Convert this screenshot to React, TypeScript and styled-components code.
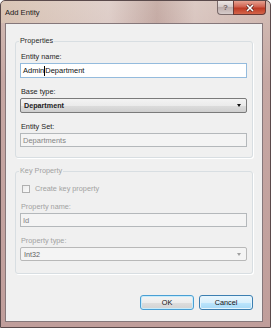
import * as React from "react";
import styled, { createGlobalStyle } from "styled-components";

const GlobalStyle = createGlobalStyle`
  html, body {
    margin: 0;
    padding: 0;
    background: #ffffff;
  }
  body {
    font-family: "Liberation Sans", Arial, sans-serif;
    font-size: 7.3px;
    color: #1e1e1e;
  }
`;

const App: React.FC = (): JSX.Element => (
  <>
    <GlobalStyle />
    <Window>
      <TitleBar>
        <Caption>Add Entity</Caption>
        <CaptionButtons>
          <HelpButton>?</HelpButton>
          <CloseButton>
            <svg width="10" height="8" viewBox="0 0 10 8">
              <path d="M2 1 L8 7 M8 1 L2 7" stroke="#5a2a24" strokeWidth="3" />
              <path d="M2 1 L8 7 M8 1 L2 7" stroke="#ffffff" strokeWidth="1.6" />
            </svg>
          </CloseButton>
        </CaptionButtons>
      </TitleBar>

      <Client>
        <Group>
          <Legend>Properties</Legend>
          <Field>
            <Label>Entity name:</Label>
            <TextBox $focused>
              Admin
              <Caret />
              Department
            </TextBox>
          </Field>
          <Field>
            <Label>Base type:</Label>
            <ComboBox>
              <ComboText>Department</ComboText>
              <Arrow />
            </ComboBox>
          </Field>
          <Field>
            <Label>Entity Set:</Label>
            <TextBox $disabled>Departments</TextBox>
          </Field>
        </Group>

        <Group $disabled>
          <Legend $disabled>Key Property</Legend>
          <CheckRow>
            <CheckBox />
            <Label $disabled>Create key property</Label>
          </CheckRow>
          <Field>
            <Label $disabled>Property name:</Label>
            <TextBox $disabled>Id</TextBox>
          </Field>
          <Field>
            <Label $disabled>Property type:</Label>
            <ComboBox $disabled>
              <ComboText $disabled>Int32</ComboText>
              <Arrow $disabled />
            </ComboBox>
          </Field>
        </Group>

        <Footer>
          <DialogButton $default>OK</DialogButton>
          <DialogButton $hot>Cancel</DialogButton>
        </Footer>
      </Client>
    </Window>
  </>
);

export default App;

const Window = styled.div`
  width: 271px;
  height: 328px;
  box-sizing: border-box;
  display: flex;
  flex-direction: column;
  border: 1px solid #5a4a4b;
  border-radius: 5px 5px 0 0;
  background: linear-gradient(180deg, #d3bdb5 0%, #c6a7a3 25%, #c09e9b 100%);
  overflow: hidden;
`;

const TitleBar = styled.div`
  height: 22px;
  flex: none;
  display: flex;
  justify-content: space-between;
  align-items: flex-start;
  padding: 0 4px 0 4px;
  background: linear-gradient(
    90deg,
    rgba(230, 215, 185, 0.35) 0%,
    rgba(255, 255, 255, 0.3) 40%,
    rgba(120, 80, 80, 0.12) 58%,
    rgba(255, 255, 255, 0.2) 72%,
    rgba(255, 255, 255, 0) 100%
  );
`;

const Caption = styled.div`
  font-size: 7.6px;
  line-height: 22px;
  color: #1a1a1a;
  padding-top: 1px;
`;

const CaptionButtons = styled.div`
  display: flex;
  height: 14px;
`;

const HelpButton = styled.div`
  width: 15px;
  height: 13px;
  border: 1px solid #7a6a6a;
  border-top: none;
  border-right: none;
  border-radius: 0 0 0 4px;
  background: linear-gradient(180deg, #ece6e4 0%, #d2c6c5 50%, #bcadac 50%, #d6cbca 100%);
  color: #6f6363;
  font-weight: bold;
  font-size: 8px;
  line-height: 13px;
  text-align: center;
`;

const CloseButton = styled.div`
  width: 31px;
  height: 13px;
  border: 1px solid #6a3a36;
  border-top: none;
  border-radius: 0 0 4px 0;
  background: linear-gradient(180deg, #e6a190 0%, #d0614f 45%, #bd3a24 55%, #d4654a 100%);
  display: flex;
  align-items: center;
  justify-content: center;
`;

const Client = styled.div`
  flex: 1;
  display: flex;
  flex-direction: column;
  margin: 0 7px 5px 4px;
  border: 1px solid #85777a;
  background: #f0f0f0;
  padding: 12px 0 11px;
`;

const Group = styled.fieldset<{ $disabled?: boolean }>`
  margin: ${p => (p.$disabled ? "8px" : "0")} 9px 0;
  padding: ${p => (p.$disabled ? "8px" : "6px")} 5px
    ${p => (p.$disabled ? "12px" : "10px")} 4px;
  border: 1px solid #d8dee2;
  border-radius: 3px;
  box-shadow: 1px 1px 0 #ffffff;
  min-width: 0;
`;

const Legend = styled.legend<{ $disabled?: boolean }>`
  padding: 0 1px;
  margin-left: -1px;
  line-height: 10px;
  color: ${p => (p.$disabled ? "#a2a2a2" : "#2a2a2a")};
`;

const Field = styled.div`
  display: flex;
  flex-direction: column;
  & + & {
    margin-top: 9px;
  }
`;

const Label = styled.div<{ $disabled?: boolean }>`
  line-height: 10px;
  margin-bottom: 1px;
  padding-left: 1px;
  color: ${p => (p.$disabled ? "#a2a2a2" : "#1e1e1e")};
`;

const TextBox = styled.div<{ $focused?: boolean; $disabled?: boolean }>`
  box-sizing: border-box;
  height: ${p => (p.$disabled ? "14px" : "15px")};
  display: flex;
  align-items: center;
  padding-left: 2px;
  font-size: 7.5px;
  border: 1px solid ${p => (p.$focused ? "#94bbdd" : "#b4b8bb")};
  background: ${p => (p.$disabled ? "#f4f4f4" : "#ffffff")};
  color: ${p => (p.$disabled ? "#858585" : "#111111")};
  white-space: pre;
`;

const Caret = styled.span`
  display: inline-block;
  width: 1px;
  height: 10px;
  background: #000000;
`;

const ComboBox = styled.div<{ $disabled?: boolean }>`
  box-sizing: border-box;
  height: ${p => (p.$disabled ? "14px" : "15px")};
  display: flex;
  align-items: center;
  justify-content: space-between;
  padding: 0 5px 0 3px;
  border: 1px solid ${p => (p.$disabled ? "#b8b8b8" : "#7a7a7a")};
  border-radius: 2px;
  background: ${p =>
    p.$disabled
      ? "#f4f4f4"
      : "linear-gradient(180deg, #f3f3f3 0%, #ebebeb 50%, #dddddd 50%, #cfcfcf 100%)"};
`;

const ComboText = styled.span<{ $disabled?: boolean }>`
  font-size: 7.2px;
  font-weight: ${p => (p.$disabled ? "normal" : "bold")};
  color: ${p => (p.$disabled ? "#5e5e5e" : "#222222")};
`;

const Arrow = styled.span<{ $disabled?: boolean }>`
  width: 0;
  height: 0;
  border-left: 2.5px solid transparent;
  border-right: 2.5px solid transparent;
  border-top: 3px solid ${p => (p.$disabled ? "#a0a0a0" : "#111111")};
`;

const CheckRow = styled.div`
  display: flex;
  align-items: center;
  gap: 4px;
  height: 10px;
  padding-left: 2px;
  margin-bottom: 8px;

  ${Label} {
    margin: 0;
    font-size: 7.3px;
  }
`;

const CheckBox = styled.span`
  box-sizing: border-box;
  width: 8px;
  height: 8px;
  border: 1px solid #b0b0b0;
  background: linear-gradient(135deg, #ececec, #fafafa);
`;

const Footer = styled.div`
  margin-top: auto;
  display: flex;
  justify-content: flex-end;
  gap: 5px;
  padding-right: 9px;
`;

const DialogButton = styled.div<{ $default?: boolean; $hot?: boolean }>`
  box-sizing: border-box;
  width: 54px;
  height: 15px;
  display: flex;
  align-items: center;
  justify-content: center;
  font-size: 7.3px;
  color: #111111;
  border: 1px solid ${p => (p.$hot ? "#3c7fb1" : "#4a9fd4")};
  border-radius: 3px;
  background: ${p =>
    p.$hot
      ? "linear-gradient(180deg, #eaf6fd 0%, #d9f0fc 50%, #bee6fd 50%, #a7d9f5 100%)"
      : "linear-gradient(180deg, #f4f4f4 0%, #ececec 50%, #dedede 50%, #d2d2d2 100%)"};
  box-shadow: ${p => (p.$default ? "inset 0 0 0 1px #c8ecfb" : "inset 0 0 0 1px #e6f5fd")};
`;
